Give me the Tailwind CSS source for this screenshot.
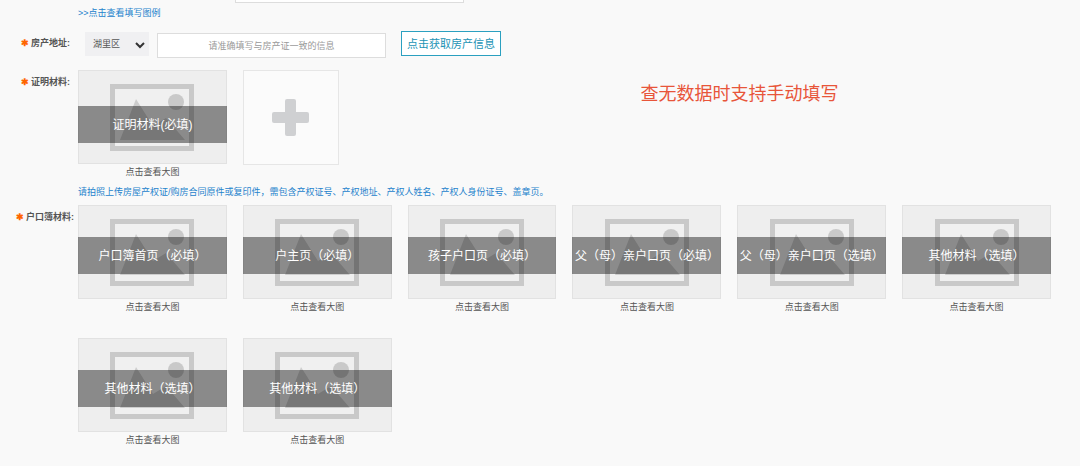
<!DOCTYPE html>
<html lang="zh-CN">
<head>
<meta charset="utf-8">
<meta name="viewport" content="width=device-width, initial-scale=1">
<title>房产与户口材料</title>
<script src="https://cdn.jsdelivr.net/npm/@tailwindcss/browser@4"></script>
</head>
<body class="min-h-screen bg-[#f9f9f9] font-['Liberation_Sans','Noto_Sans_CJK_SC',sans-serif] text-[9px] leading-3 text-[#555]">
<svg class="hidden" aria-hidden="true">
  <symbol id="photo" viewBox="0 0 84 67">
    <rect x="2.5" y="2.5" width="79" height="62" fill="#f0f0f0" stroke="#c9c9c9" stroke-width="5"/>
    <circle cx="66" cy="18" r="8" fill="#c9c9c9"/>
    <path d="M10 56 26 15 43 42 56 34 75 56Z" fill="#cdcdcd"/>
  </symbol>
</svg>
<form class="pb-5">
  <div class="flex">
    <div class="w-[78px] shrink-0"></div>
    <div class="flex flex-col items-start">
      <div class="ml-[157px] h-[3px] w-[229px] border border-t-0 border-[#ddd] bg-white"></div>
      <a href="#" class="mt-1 text-[#2482cc]">&gt;&gt;点击查看填写图例</a>
    </div>
  </div>

  <div class="mt-3 flex items-start">
    <label for="address" class="mt-1.5 w-[78px] shrink-0 pr-2 text-right font-bold"><span class="mr-0.5 text-[#f60]">✱</span>房产地址:</label>
    <div class="relative ml-[7px] mt-px">
      <select aria-label="所在区" class="h-6 w-16 appearance-none bg-[#f0f0f2] pl-2 text-[9px] text-[#555]"><option>湖里区</option></select>
      <svg class="pointer-events-none absolute right-1 top-2 size-2.5" viewBox="0 0 10 10" fill="none" stroke="#333" stroke-width="2"><path d="m1 3 4 4 4-4"/></svg>
    </div>
    <input id="address" placeholder="请准确填写与房产证一致的信息" class="ml-2 mt-0.5 h-[25px] w-[229px] border border-[#ddd] bg-white text-center text-[9px] placeholder:text-[#999]">
    <button type="button" class="ml-[15px] h-[25px] w-[100px] border border-[#2ba0c0] bg-white text-[11px] text-[#2293b5]">点击获取房产信息</button>
  </div>

  <div class="mt-3 flex items-start">
    <div class="mt-1.5 w-[78px] shrink-0 pr-2 text-right font-bold"><span class="mr-0.5 text-[#f60]">✱</span>证明材料:</div>
    <div class="mr-[29px] grid flex-1 grid-cols-6 gap-x-4">
      <figure>
        <div class="relative h-[94px] border border-[#e2e2e2] bg-[#eee]">
          <svg class="mx-auto mt-[13px] h-[67px] w-[84px]"><use href="#photo"/></svg>
          <div class="absolute -inset-x-px top-[35px] flex h-[37px] items-center justify-center whitespace-nowrap bg-black/42 text-xs text-white">证明材料(必填)</div>
        </div>
        <figcaption class="mt-0.5 text-center"><a href="#">点击查看大图</a></figcaption>
      </figure>
      <button type="button" aria-label="添加材料" class="flex h-[95px] w-24 items-center justify-center border border-[#e6e6e6] bg-[#fbfbfb]">
        <svg class="size-[37px]" viewBox="0 0 37 37" fill="#cfd0d2"><rect x="13" width="11" height="37" rx="2"/><rect y="13" width="37" height="11" rx="2"/></svg>
      </button>
      <p class="col-span-3 col-start-4 mt-3 ml-[68px] text-lg leading-6 text-[#e8553a]">查无数据时支持手动填写</p>
    </div>
  </div>

  <p class="mt-2 ml-[78px] text-[#2482cc]">请拍照上传房屋产权证/购房合同原件或复印件，需包含产权证号、产权地址、产权人姓名、产权人身份证号、盖章页。</p>

  <div class="mt-[7px] flex items-start">
    <div class="mt-1.5 w-[78px] shrink-0 pr-1 text-right font-bold"><span class="mr-0.5 text-[#f60]">✱</span>户口簿材料:</div>
    <div id="household" class="mr-[29px] grid flex-1 grid-cols-6 gap-x-4 gap-y-[25px]"></div>
  </div>
</form>
<template id="card">
  <figure>
    <div class="relative h-[94px] border border-[#e2e2e2] bg-[#eee]">
      <svg class="mx-auto mt-[13px] h-[67px] w-[84px]"><use href="#photo"/></svg>
      <div class="title absolute -inset-x-px top-[31px] flex h-[37px] items-center justify-center whitespace-nowrap bg-black/42 text-xs text-white"></div>
    </div>
    <figcaption class="mt-0.5 text-center"><a href="#">点击查看大图</a></figcaption>
  </figure>
</template>
<script>
  const titles = ['户口簿首页（必填）', '户主页（必填）', '孩子户口页（必填）', '父（母）亲户口页（必填）', '父（母）亲户口页（选填）', '其他材料（选填）', '其他材料（选填）', '其他材料（选填）'];
  const list = document.getElementById('household');
  for (const title of titles) {
    const card = document.getElementById('card').content.cloneNode(true);
    card.querySelector('.title').textContent = title;
    list.append(card);
  }
</script>
</body>
</html>
